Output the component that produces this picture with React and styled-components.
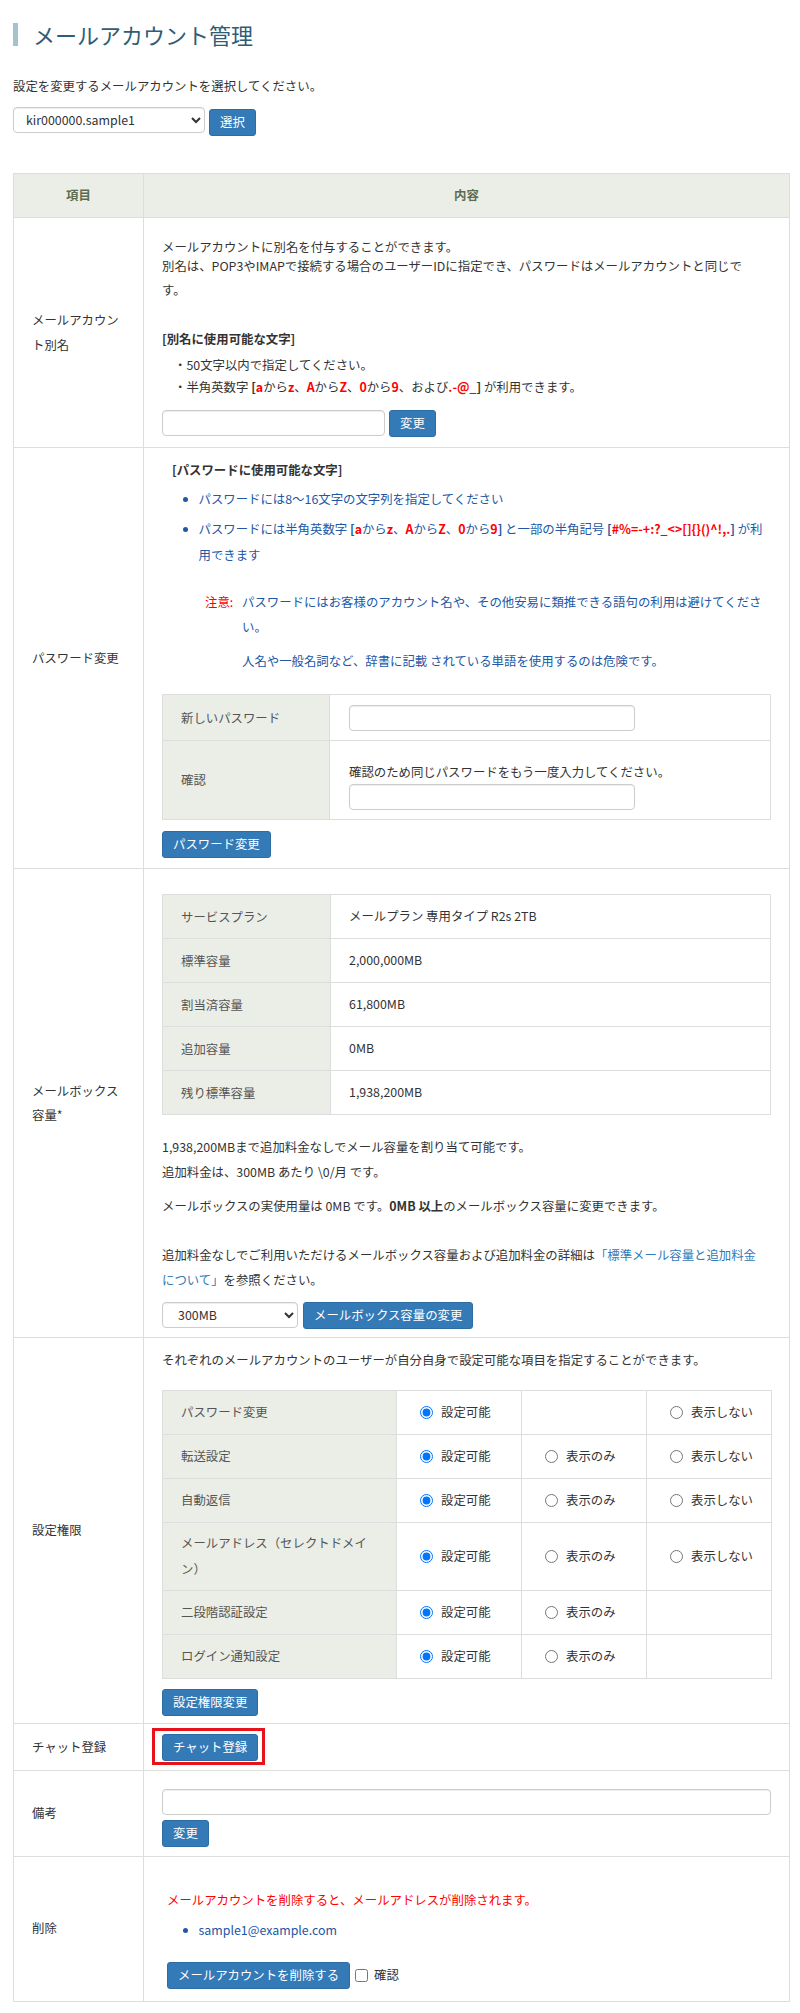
import React from 'react';
import styled, { createGlobalStyle } from 'styled-components';

const BLUE = '#2157a5';
const RED = '#ff0000';
const BORDER = '#dddddd';
const SHADE = '#eaeee6';

const GlobalStyle = createGlobalStyle`
  html, body { margin: 0; padding: 0; background: #fff; }
  body {
    font-family: "Noto Sans CJK JP", "Noto Sans", sans-serif;
    font-size: 12.4px;
    line-height: 17.7px;
    color: #333;
  }
  * { box-sizing: border-box; }
`;

const Page = styled.main`
  padding: 0 10px 12px 13px;
`;

const Title = styled.h1`
  display: flex;
  align-items: center;
  height: 23px;
  margin: 23px 0 0;
  font-size: 22px;
  font-weight: normal;
  line-height: 23px;
  color: #2f5c77;
`;

const TitleBar = styled.span`
  flex: none;
  width: 5px;
  height: 23px;
  margin-right: 15px;
  background: #a3c4cb;
`;

const Lead = styled.p`
  margin: 32px 0 0;
  line-height: 17.7px;
`;

const Picker = styled.div`
  display: flex;
  align-items: flex-start;
  gap: 4px;
  margin-top: 11px;
`;

const Select = styled.select`
  flex: none;
  width: ${(p) => p.$w}px;
  height: 26px;
  padding: 0 ${(p) => p.$pad ?? 8}px;
  border: 1px solid #ccc;
  border-radius: 4px;
  background: #fff;
  color: #333;
  font: inherit;
  box-shadow: inset 0 1px 1px rgba(0, 0, 0, 0.075);
`;

const Button = styled.button`
  flex: none;
  display: inline-flex;
  align-items: center;
  height: 27px;
  margin-top: ${(p) => p.$mt || 0}px;
  padding: 0 10px;
  border: 1px solid #2e6da4;
  border-radius: 3px;
  background: #337ab7;
  color: #fff;
  font: inherit;
  line-height: 25px;
  white-space: nowrap;
`;

const Sheet = styled.table`
  width: 777px;
  margin-top: 37.5px;
  border-collapse: collapse;
  table-layout: fixed;
  border: 1px solid ${BORDER};
`;

const SheetRow = styled.tr`
  height: ${(p) => p.$h}px;
`;

const Col = styled.col`
  width: ${(p) => p.$w}px;
`;

const HeadCell = styled.th`
  padding: 0;
  background: ${SHADE};
  color: #5d6c50;
  font-weight: bold;
  text-align: center;
  vertical-align: middle;
  border: 1px solid ${BORDER};
`;

const ItemCell = styled.td`
  padding: 0 18px;
  vertical-align: middle;
  line-height: 24.7px;
  border: 1px solid ${BORDER};
`;

const BodyCell = styled.td`
  padding: ${(p) => p.$pt ?? 10}px 18px 4px;
  vertical-align: top;
  border: 1px solid ${BORDER};
`;

const toneColor = (t) => (t === 'red' ? RED : t === 'blue' ? BLUE : 'inherit');

const Para = styled.p`
  margin: ${(p) => p.$mt || 0}px 0 0;
  padding-left: ${(p) => p.$indent || 0}px;
  line-height: ${(p) => p.$lh || 24.7}px;
  color: ${(p) => toneColor(p.$tone)};
  white-space: ${(p) => (p.$keep ? 'nowrap' : 'normal')};
`;

const Heading = styled(Para)`
  font-weight: bold;
`;

const Key = styled.b`
  color: ${RED};
`;

const Bracket = styled.b``;

const DotList = styled.ul`
  margin: ${(p) => p.$mt || 0}px 0 0;
  padding: 0 0 0 12px;
  list-style: none;
  line-height: 21.7px;
`;

const RuleList = styled.ul`
  margin: ${(p) => p.$mt || 0}px 0 0;
  padding-left: 36.5px;
  list-style: disc;
  color: ${BLUE};
  line-height: 26px;
  li + li { margin-top: 4px; }
`;

const Rule = styled.li`
  white-space: ${(p) => (p.$keep ? 'nowrap' : 'normal')};
`;

const Caution = styled.div`
  display: grid;
  grid-template-columns: 37px 1fr;
  margin-top: ${(p) => p.$mt || 0}px;
  padding-left: 43px;
  line-height: 25.4px;
  color: ${BLUE};
`;

const CautionTag = styled.span`
  color: ${RED};
`;

const CautionText = styled.span`
  white-space: nowrap;
`;

const CautionNote = styled.span`
  grid-column: 2;
  margin-top: 9px;
`;

const Grid = styled.table`
  width: 100%;
  margin-top: ${(p) => p.$mt || 0}px;
  border-collapse: collapse;
  table-layout: fixed;
  border: 1px solid ${BORDER};
`;

const GridRow = styled.tr`
  height: ${(p) => p.$h}px;
`;

const GridLabel = styled.td`
  padding: 0 18px;
  background: ${SHADE};
  color: #555;
  line-height: 26px;
  vertical-align: middle;
  border: 1px solid ${BORDER};
`;

const GridValue = styled.td`
  padding: ${(p) => p.$pad || '0 18px'};
  vertical-align: middle;
  border: 1px solid ${BORDER};
`;

const Hint = styled.p`
  margin: 14px 0 0;
  line-height: 17.7px;
`;

const TextInput = styled.input`
  display: block;
  width: ${(p) => (p.$w ? `${p.$w}px` : '100%')};
  height: 26.5px;
  margin-top: ${(p) => p.$mt || 0}px;
  padding: 0 8px;
  border: 1px solid #ccc;
  border-radius: 4px;
  background: #fff;
  font: inherit;
  box-shadow: inset 0 1px 1px rgba(0, 0, 0, 0.075);
`;

const ActionRow = styled.div`
  display: flex;
  align-items: center;
  gap: ${(p) => p.$gap ?? 4}px;
  margin-top: ${(p) => p.$mt || 0}px;
  padding-left: ${(p) => p.$indent || 0}px;
`;

const Choice = styled.label`
  display: flex;
  align-items: center;
  line-height: 24.7px;
  color: #333;
  white-space: nowrap;
`;

const Radio = styled.input`
  flex: none;
  width: 13px;
  height: 13px;
  margin: 0 8px 0 5px;
`;

const Check = styled.input`
  flex: none;
  width: 13px;
  height: 13px;
  margin: 0 6px 0 5px;
`;

const Link = styled.a`
  color: #337ab7;
  text-decoration: none;
`;

const Marked = styled.div`
  position: relative;
  display: flex;
  width: fit-content;
  &::after {
    content: '';
    position: absolute;
    top: -6px;
    left: -10px;
    right: -7px;
    bottom: -4px;
    border: 3px solid #e8121b;
    pointer-events: none;
  }
`;

const capacity = [
  ['サービスプラン', 'メールプラン 専用タイプ R2s 2TB'],
  ['標準容量', '2,000,000MB'],
  ['割当済容量', '61,800MB'],
  ['追加容量', '0MB'],
  ['残り標準容量', '1,938,200MB'],
];

const permissions = [
  { label: 'パスワード変更', opts: [true, false, true], h: 44 },
  { label: '転送設定', opts: [true, true, true], h: 44 },
  { label: '自動返信', opts: [true, true, true], h: 44 },
  { label: ['メールアドレス（セレクトドメイ', 'ン）'], opts: [true, true, true], h: 68 },
  { label: '二段階認証設定', opts: [true, true, false], h: 44 },
  { label: 'ログイン通知設定', opts: [true, true, false], h: 44 },
];

const optionNames = ['設定可能', '表示のみ', '表示しない'];

function PermissionRow({ row, index }) {
  return (
    <GridRow $h={row.h}>
      <GridLabel>
        {Array.isArray(row.label) ? (
          <>
            {row.label[0]}
            <br />
            {row.label[1]}
          </>
        ) : (
          row.label
        )}
      </GridLabel>
      {row.opts.map((show, i) => (
        <GridValue key={i}>
          {show && (
            <Choice>
              <Radio type="radio" name={`perm-${index}`} defaultChecked={i === 0} />
              {optionNames[i]}
            </Choice>
          )}
        </GridValue>
      ))}
    </GridRow>
  );
}

export default function App() {
  return (
    <>
      <GlobalStyle />
      <Page>
        <Title>
          <TitleBar />
          メールアカウント管理
        </Title>
        <Lead>設定を変更するメールアカウントを選択してください。</Lead>
        <Picker>
          <Select $w={192} $pad={8} defaultValue="kir000000.sample1">
            <option>kir000000.sample1</option>
          </Select>
          <Button $mt={2}>選択</Button>
        </Picker>

        <Sheet>
          <colgroup>
            <Col $w={130} />
            <Col />
          </colgroup>
          <thead>
            <SheetRow $h={44}>
              <HeadCell>項目</HeadCell>
              <HeadCell>内容</HeadCell>
            </SheetRow>
          </thead>
          <tbody>
            <SheetRow $h={230}>
              <ItemCell>メールアカウント別名</ItemCell>
              <BodyCell>
                <Para $lh={17.7} $mt={10.8}>メールアカウントに別名を付与することができます。</Para>
                <Para $mt={-3.2} $keep>
                  別名は、POP3やIMAPで接続する場合のユーザーIDに指定でき、パスワードはメールアカウントと同じで
                  <br />
                  す。
                </Para>
                <Heading $mt={23.8}>[別名に使用可能な文字]</Heading>
                <DotList $mt={3.5}>
                  <li>・50文字以内で指定してください。</li>
                  <li>
                    ・半角英数字 <Bracket>[</Bracket>
                    <Key>a</Key>から<Key>z</Key>、<Key>A</Key>から<Key>Z</Key>、<Key>0</Key>から
                    <Key>9</Key>、および<Key>.-@_</Key>
                    <Bracket>]</Bracket> が利用できます。
                  </li>
                </DotList>
                <ActionRow $mt={11.2} $gap={4}>
                  <TextInput $w={223} type="text" />
                  <Button>変更</Button>
                </ActionRow>
              </BodyCell>
            </SheetRow>

            <SheetRow $h={421}>
              <ItemCell>パスワード変更</ItemCell>
              <BodyCell>
                <Heading $indent={10}>[パスワードに使用可能な文字]</Heading>
                <RuleList $mt={3.2}>
                  <Rule>パスワードには8〜16文字の文字列を指定してください</Rule>
                  <Rule $keep>
                    パスワードには半角英数字 <Bracket>[</Bracket>
                    <Key>a</Key>から<Key>z</Key>、<Key>A</Key>から<Key>Z</Key>、<Key>0</Key>から
                    <Key>9</Key>
                    <Bracket>]</Bracket> と一部の半角記号 <Bracket>[</Bracket>
                    <Key>#%=-+:?_&lt;&gt;[]{'{}'}()^!,.</Key>
                    <Bracket>]</Bracket> が利
                    <br />
                    用できます
                  </Rule>
                </RuleList>
                <Caution $mt={21.5}>
                  <CautionTag>注意:</CautionTag>
                  <CautionText>
                    パスワードにはお客様のアカウント名や、その他安易に類推できる語句の利用は避けてくださ
                    <br />
                    い。
                  </CautionText>
                  <CautionNote>人名や一般名詞など、辞書に記載 されている単語を使用するのは危険です。</CautionNote>
                </Caution>
                <Grid $mt={19.5}>
                  <colgroup>
                    <Col $w={167} />
                    <Col />
                  </colgroup>
                  <tbody>
                    <GridRow $h={46}>
                      <GridLabel>新しいパスワード</GridLabel>
                      <GridValue $pad="0 19px">
                        <TextInput $w={286} type="password" />
                      </GridValue>
                    </GridRow>
                    <GridRow $h={79}>
                      <GridLabel>確認</GridLabel>
                      <GridValue $pad="9px 19px">
                        <Hint>確認のため同じパスワードをもう一度入力してください。</Hint>
                        <TextInput $w={286} $mt={1.5} type="password" />
                      </GridValue>
                    </GridRow>
                  </tbody>
                </Grid>
                <ActionRow $mt={10.5}>
                  <Button>パスワード変更</Button>
                </ActionRow>
              </BodyCell>
            </SheetRow>

            <SheetRow $h={469}>
              <ItemCell>メールボックス容量*</ItemCell>
              <BodyCell>
                <Grid $mt={15}>
                  <colgroup>
                    <Col $w={168} />
                    <Col />
                  </colgroup>
                  <tbody>
                    {capacity.map(([k, v]) => (
                      <GridRow key={k} $h={44}>
                        <GridLabel>{k}</GridLabel>
                        <GridValue>{v}</GridValue>
                      </GridRow>
                    ))}
                  </tbody>
                </Grid>
                <Para $lh={25} $mt={19.9}>
                  1,938,200MBまで追加料金なしでメール容量を割り当て可能です。
                  <br />
                  追加料金は、300MB あたり {'\\'}0/月 です。
                </Para>
                <Para $lh={25} $mt={9.3}>
                  メールボックスの実使用量は 0MB です。<b>0MB 以上</b>のメールボックス容量に変更できます。
                </Para>
                <Para $lh={25} $mt={24}>
                  追加料金なしでご利用いただけるメールボックス容量および追加料金の詳細は
                  <Link href="#">
                    「標準メール容量と追加料金
                    <br />
                    について」
                  </Link>
                  を参照ください。
                </Para>
                <ActionRow $mt={8.5} $gap={5}>
                  <Select $w={136} $pad={11} defaultValue="300MB">
                    <option>300MB</option>
                  </Select>
                  <Button>メールボックス容量の変更</Button>
                </ActionRow>
              </BodyCell>
            </SheetRow>

            <SheetRow $h={386}>
              <ItemCell>設定権限</ItemCell>
              <BodyCell>
                <Para>それぞれのメールアカウントのユーザーが自分自身で設定可能な項目を指定することができます。</Para>
                <Grid $mt={17}>
                  <colgroup>
                    <Col $w={234} />
                    <Col $w={125} />
                    <Col $w={125} />
                    <Col $w={125} />
                  </colgroup>
                  <tbody>
                    {permissions.map((row, i) => (
                      <PermissionRow key={i} row={row} index={i} />
                    ))}
                  </tbody>
                </Grid>
                <ActionRow $mt={10.3}>
                  <Button>設定権限変更</Button>
                </ActionRow>
              </BodyCell>
            </SheetRow>

            <SheetRow $h={46.6}>
              <ItemCell>チャット登録</ItemCell>
              <BodyCell>
                <Marked>
                  <Button>チャット登録</Button>
                </Marked>
              </BodyCell>
            </SheetRow>

            <SheetRow $h={86}>
              <ItemCell>備考</ItemCell>
              <BodyCell $pt={18}>
                <TextInput type="text" />
                <ActionRow $mt={4.7}>
                  <Button>変更</Button>
                </ActionRow>
              </BodyCell>
            </SheetRow>

            <SheetRow $h={145}>
              <ItemCell>削除</ItemCell>
              <BodyCell>
                <Para $tone="red" $indent={5} $mt={21}>
                  メールアカウントを削除すると、メールアドレスが削除されます。
                </Para>
                <RuleList $mt={4.8}>
                  <Rule>sample1@example.com</Rule>
                </RuleList>
                <ActionRow $mt={18.3} $indent={5} $gap={0}>
                  <Button>メールアカウントを削除する</Button>
                  <Choice>
                    <Check type="checkbox" />
                    確認
                  </Choice>
                </ActionRow>
              </BodyCell>
            </SheetRow>
          </tbody>
        </Sheet>
      </Page>
    </>
  );
}
